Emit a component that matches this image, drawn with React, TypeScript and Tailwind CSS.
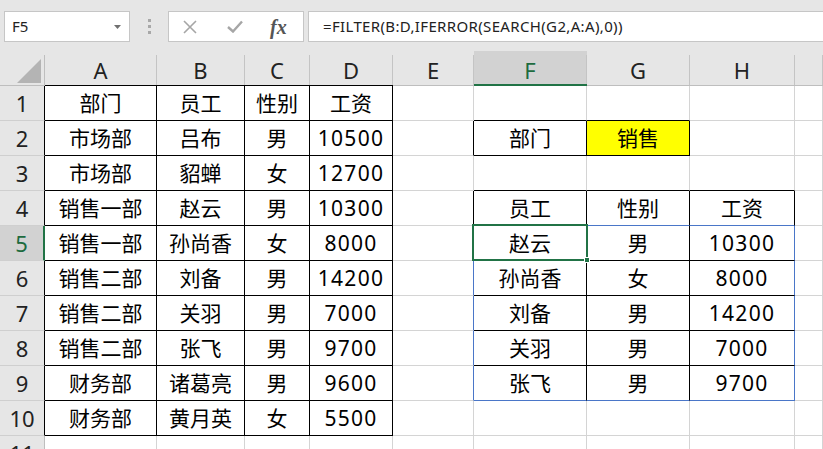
import React from "react";

type Cell = {
  v?: string;
  r?: "g" | "k" | "b";
  b?: "g" | "k" | "b";
  bg?: string;
};

const R = {
  g: "border-r-[#d4d4d4]",
  k: "border-r-black",
  b: "border-r-[#4a76c8]",
};
const B = {
  g: "border-b-[#d4d4d4]",
  k: "border-b-black",
  b: "border-b-[#4a76c8]",
};

const cols = ["A", "B", "C", "D", "E", "F", "G", "H", ""];

const left = [
  ["部门", "员工", "性别", "工资"],
  ["市场部", "吕布", "男", "10500"],
  ["市场部", "貂蝉", "女", "12700"],
  ["销售一部", "赵云", "男", "10300"],
  ["销售一部", "孙尚香", "女", "8000"],
  ["销售二部", "刘备", "男", "14200"],
  ["销售二部", "关羽", "男", "7000"],
  ["销售二部", "张飞", "男", "9700"],
  ["财务部", "诸葛亮", "男", "9600"],
  ["财务部", "黄月英", "女", "5500"],
];

const result = [
  ["赵云", "男", "10300"],
  ["孙尚香", "女", "8000"],
  ["刘备", "男", "14200"],
  ["关羽", "男", "7000"],
  ["张飞", "男", "9700"],
];

// builds the cells for each row, columns A..I
function buildRow(row: number): Cell[] {
  const cells: Cell[] = [];
  for (let c = 0; c < 9; c++) cells.push({ r: "g", b: "g" });
  if (row <= 10) {
    for (let c = 0; c < 4; c++) {
      cells[c] = { v: left[row - 1][c], r: "k", b: "k" };
    }
  }
  // E column right edge
  if (row === 2 || row === 4) cells[4].r = "k";
  if (row >= 5 && row <= 9) cells[4].r = "b";
  if (row === 1) {
    cells[5].b = "k";
    cells[6].b = "k";
  }
  if (row === 2) {
    cells[5] = { v: "部门", r: "k", b: "k" };
    cells[6] = { v: "销售", r: "k", b: "k", bg: "bg-[#ffff00]" };
  }
  if (row === 3) {
    cells[5].b = "k";
    cells[6].b = "k";
    cells[7].b = "k";
  }
  if (row === 4) {
    cells[5] = { v: "员工", r: "k", b: "b" };
    cells[6] = { v: "性别", r: "k", b: "b" };
    cells[7] = { v: "工资", r: "k", b: "b" };
  }
  if (row >= 5 && row <= 9) {
    const d = result[row - 5];
    const bot = row === 9 ? "b" : "k";
    cells[5] = { v: d[0], r: "k", b: bot };
    cells[6] = { v: d[1], r: "k", b: bot };
    cells[7] = { v: d[2], r: "b", b: bot };
  }
  return cells;
}

const grid =
  "grid grid-cols-[45px_112px_88px_65px_83px_81px_113px_103px_105px_1fr]";

export default function App() {
  const rows = Array.from({ length: 11 }, (_, i) => i + 1);
  return (
    <div
      className="w-[823px] h-[449px] overflow-hidden bg-white text-black"
      style={{ fontFamily: '"Noto Sans", "Noto Sans CJK SC", sans-serif' }}
    >
      {/* formula bar */}
      <div className="h-[51px] bg-[#e6e6e6] flex items-start pt-[11px]">
        <div className="ml-[4px] w-[126px] h-[31px] bg-white border border-[#c6c6c6] flex items-center pl-[7px] pr-[8px]">
          <span className="text-[15px] text-[#222] flex-1">F5</span>
          <svg width="7" height="4" viewBox="0 0 7 4">
            <polygon points="0,0 7,0 3.5,4" fill="#707070" />
          </svg>
        </div>
        <div className="w-[38px] h-[31px] flex flex-col items-center justify-center gap-[3px]">
          <span className="w-[3px] h-[3px] bg-[#a8a8a8]" />
          <span className="w-[3px] h-[3px] bg-[#a8a8a8]" />
          <span className="w-[3px] h-[3px] bg-[#a8a8a8]" />
        </div>
        <div className="w-[136px] h-[31px] bg-white border border-[#c6c6c6] flex items-center">
          <svg width="14" height="14" viewBox="0 0 14 14" className="ml-[14px]">
            <path d="M1 1 L13 13 M13 1 L1 13" stroke="#a6a6a6" strokeWidth="1.6" />
          </svg>
          <svg width="16" height="13" viewBox="0 0 16 13" className="ml-[30px]">
            <path d="M1 7 L6 11.5 L15 1.5" stroke="#a6a6a6" strokeWidth="2.4" fill="none" />
          </svg>
          <span
            className="ml-[27px] text-[20px] italic font-bold text-[#555] leading-none"
            style={{ fontFamily: '"Liberation Serif", serif' }}
          >
            fx
          </span>
        </div>
        <div className="ml-[4px] flex-1 h-[31px] bg-white border border-[#c6c6c6] border-r-0 flex items-center pl-[14px]">
          <span className="text-[15px] tracking-[0.35px] text-[#222] whitespace-nowrap">
            =FILTER(B:D,IFERROR(SEARCH(G2,A:A),0))
          </span>
        </div>
      </div>

      {/* column headers */}
      <div className={grid + " h-[35px] bg-[#e6e6e6]"}>
        <div className="h-[35px] pt-[4px] border-b border-b-[#bebebe]">
          <div className="h-[31px] border-r border-r-[#bebebe] flex items-end justify-end pr-[3px] pb-[3px]">
            <svg width="24" height="24" viewBox="0 0 24 24">
              <polygon points="24,0 24,24 0,24" fill="#b4b4b4" />
            </svg>
          </div>
        </div>
        {cols.map((c, i) => {
          const sel = c === "F";
          const bcol =
            i < 4
              ? "border-b-black"
              : sel
                ? "border-b-2 border-b-[#217346]"
                : "border-b-[#bebebe]";
          return (
            <div
              key={i}
              className={
                "h-[35px] pt-[4px] border-b " +
                bcol +
                (sel ? " bg-[#d2d2d2]" : "")
              }
            >
              <div
                className={
                  "h-full border-r border-r-[#c4c4c4] flex items-center justify-center text-[22px] leading-none " +
                  (sel ? "text-[#1d6b3f]" : "text-[#222]")
                }
              >
                {c}
              </div>
            </div>
          );
        })}
      </div>

      {/* rows */}
      <div className="relative">
        {rows.map((row) => {
          const cells = buildRow(row);
          const sel = row === 5;
          return (
            <div key={row} className={grid + " h-[35px]"}>
              <div
                className={
                  "h-[35px] border-b border-b-[#cfcfcf] flex items-center justify-center text-[22px] leading-none " +
                  (sel
                    ? "bg-[#d2d2d2] text-[#1d6b3f] border-r-2 border-r-[#217346]"
                    : "bg-[#e6e6e6] text-[#222] border-r " +
                      (row <= 10 ? "border-r-black" : "border-r-[#bebebe]"))
                }
              >
                {row}
              </div>
              {cells.map((cell, i) => {
                const num = cell.v !== undefined && /^\d+$/.test(cell.v);
                return (
                  <div
                    key={i}
                    className={
                      "h-[35px] border-r border-b flex items-center justify-center text-[21px] leading-none whitespace-nowrap " +
                      (num ? "tracking-[1.3px] " : "") +
                      R[cell.r || "g"] +
                      " " +
                      B[cell.b || "g"] +
                      " " +
                      (cell.bg || "")
                    }
                  >
                    {cell.v}
                  </div>
                );
              })}
            </div>
          );
        })}

        {/* active cell F5 */}
        <div className="absolute left-[472px] top-[138px] w-[116px] h-[37px] border-2 border-[#217346] pointer-events-none">
          <div className="absolute -right-[4px] -bottom-[4px] w-[6px] h-[6px] bg-[#217346] border border-white" />
        </div>
      </div>
    </div>
  );
}
